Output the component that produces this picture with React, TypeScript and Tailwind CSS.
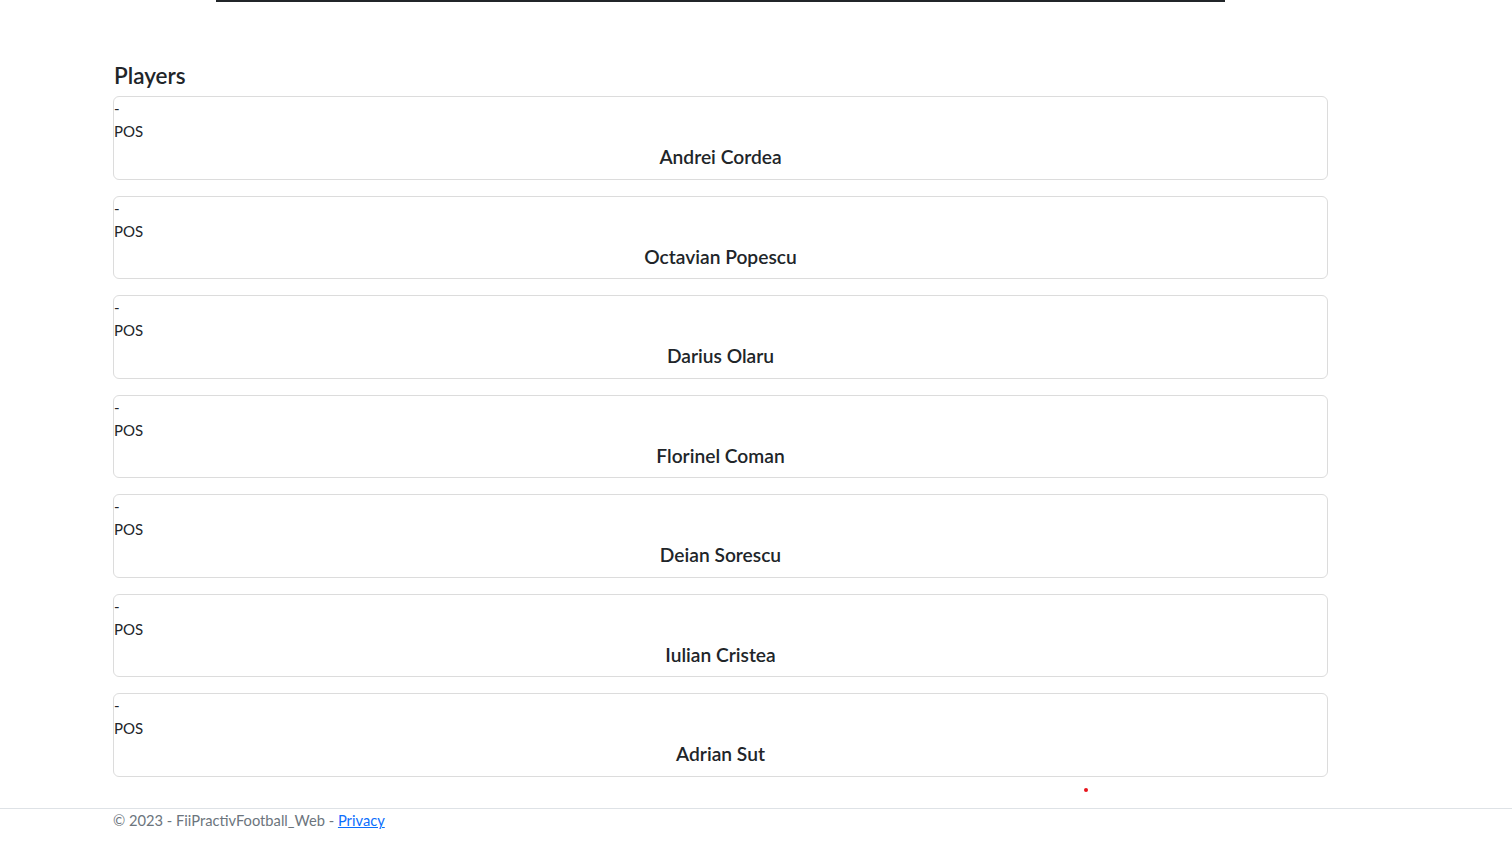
const PLAYERS = [
  "Andrei Cordea",
  "Octavian Popescu",
  "Darius Olaru",
  "Florinel Coman",
  "Deian Sorescu",
  "Iulian Cristea",
  "Adrian Sut",
];

function PlayerCard({ name }: { name: string }) {
  return (
    <div className="flex h-[83.5px] flex-col rounded-[6px] border border-[#dcdcdc] bg-white">
      <div className="h-[22px] text-[15px] leading-[22px]">-</div>
      <div className="h-[24px] text-[15px] leading-[24px]">POS</div>
      <div className="h-[24px] pt-[2px] text-center text-[19.2px] font-semibold leading-[24px]">{name}</div>
    </div>
  );
}

export default function App() {
  return (
    <div
      className="relative min-h-[863px] bg-white text-[#212529]"
      style={{ fontFamily: "Lato, 'Open Sans', sans-serif" }}
    >
      <div className="ml-[216px] h-[2px] w-[1009px] bg-[#212529]" />

      <main className="ml-[113px] w-[1215px]">
        <h2 className="mt-[59px] mb-[6px] h-[29px] pl-px text-[22.5px] font-semibold leading-[29px]">Players</h2>
        <div className="flex flex-col gap-4">
          {PLAYERS.map((p) => (
            <PlayerCard key={p} name={p} />
          ))}
        </div>
      </main>

      <footer className="mt-[31.5px] border-t border-[#dee2e6]">
        <div className="ml-[113px] h-[22px] text-[14.7px] leading-[22px] text-[#6c757d]">
          © 2023 - FiiPractivFootball_Web -{" "}
          <a href="#" className="text-[#0d6efd] underline">
            Privacy
          </a>
        </div>
      </footer>

      <span className="absolute left-[1084px] top-[788px] h-[4px] w-[4px] rounded-full bg-[#e8141c]" />
    </div>
  );
}
